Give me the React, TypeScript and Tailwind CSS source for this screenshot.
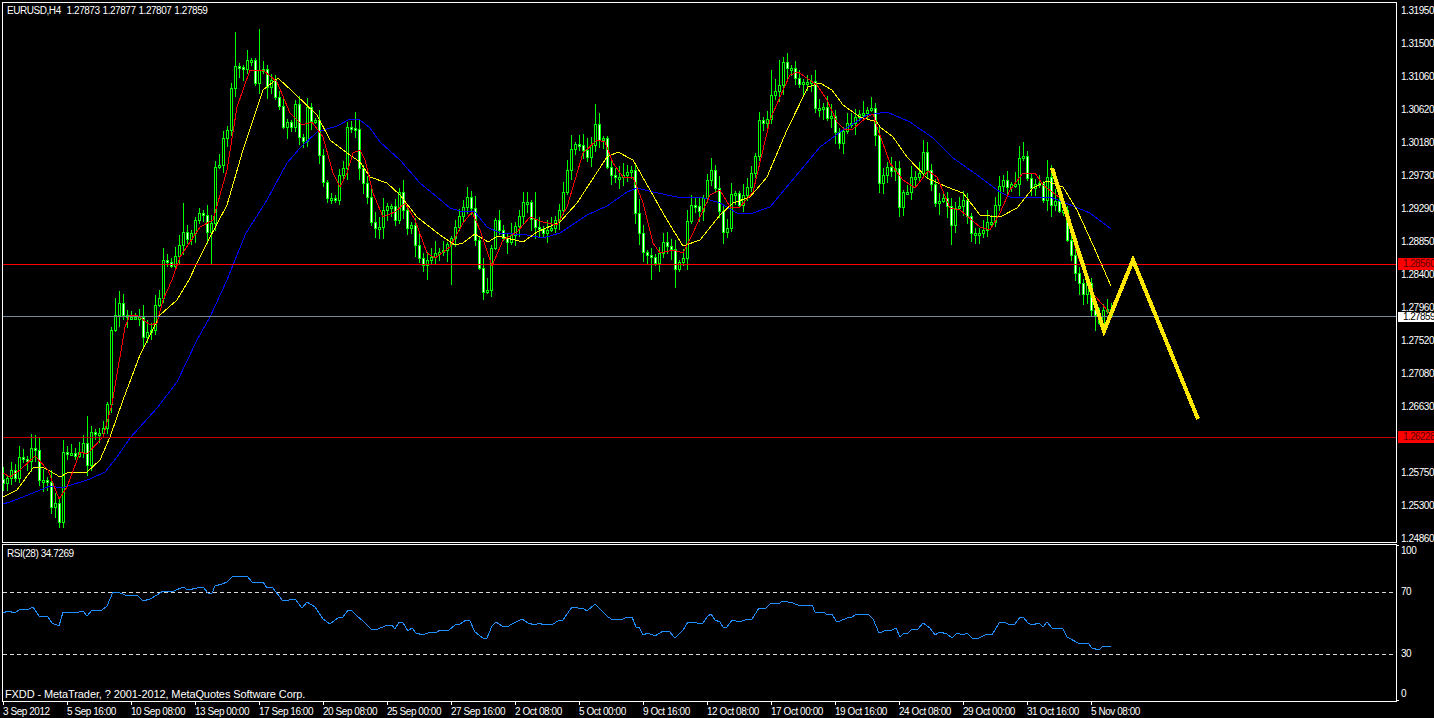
const SANS = "font-['Liberation_Sans',Arial,sans-serif]";

// all chart coordinates are screen pixels, the svg viewBox maps them 1:1
const BLUE = "3,504 10,502 33,493 50,486 62,488 90,479 105,472 117,457 130,438 157,408 177,382 197,340 210,317 227,280 235,260 246,233 267,200 287,163 300,148 317,132 337,126 350,119 360,120 370,128 380,142 400,160 420,183 437,197 450,208 460,211 475,212 487,227 500,233 527,235 543,238 560,233 587,215 607,206 627,192 637,188 653,192 677,197 700,197 720,203 737,213 750,214 770,207 790,183 820,147 843,130 867,115 887,112 910,122 933,138 953,158 980,177 1000,192 1010,197 1050,197 1073,206 1090,213 1111,229";
const YELLOW = "3,497 17,490 33,468 42,467 50,471 60,477 67,473 87,472 100,460 110,437 123,400 140,355 160,315 177,300 189,280 197,263 207,243 227,205 243,150 263,90 278,78 293,92 317,115 330,140 347,153 360,162 370,177 387,183 400,195 417,217 440,235 455,245 463,243 475,234 488,242 498,236 523,242 537,232 560,222 577,203 590,183 607,157 618,152 633,160 650,190 667,220 683,246 700,240 720,215 733,203 750,197 767,177 787,130 808,87 820,83 832,90 843,105 860,117 877,122 880,127 893,137 907,157 927,178 947,187 963,193 980,215 1000,217 1017,208 1033,188 1047,181 1063,187 1077,210 1093,245 1111,286";
const RED = "3,473 10,477 20,470 35,456 48,470 59,499 67,487 80,452 87,454 103,437 112,404 125,327 130,315 137,315 150,325 157,323 163,300 172,280 180,257 200,227 213,220 227,170 237,107 250,70 263,70 277,82 290,113 302,125 312,122 323,137 333,173 340,187 347,173 353,153 360,150 365,160 373,193 383,217 395,212 405,203 415,220 427,253 435,258 450,247 463,223 472,212 480,230 492,266 503,240 517,232 530,217 543,222 557,225 567,207 583,153 597,140 605,142 613,163 623,177 633,177 643,203 653,243 660,253 673,250 683,253 693,233 710,195 720,190 730,207 740,207 753,192 770,120 780,97 790,75 798,72 817,85 827,100 837,122 845,130 853,129 867,117 873,114 878,130 890,163 903,180 915,188 928,171 937,177 950,208 960,210 980,227 990,230 1000,213 1010,190 1023,173 1035,173 1043,185 1060,198 1068,220 1077,253 1090,290 1107,310 1110,315";
const RSI = "3,613 8,611 15,613 20,609 27,610 33,607 39,616 48,617 52,623 59,626 63,612 75,613 83,611 87,616 92,610 102,610 107,606 113,592 118,592 125,595 137,595 143,601 150,599 157,595 163,591 172,592 183,587 188,590 197,588 203,587 208,593 212,593 215,586 222,584 227,582 233,576 243,577 247,576 252,582 263,582 267,588 272,587 283,601 295,599 302,608 307,602 315,607 323,619 330,624 338,618 343,617 348,610 352,611 357,616 363,621 372,630 378,629 385,626 392,625 395,629 399,622 403,623 408,631 412,628 416,633 423,635 430,632 437,632 440,630 448,631 455,625 460,624 466,620 470,621 475,632 483,638 487,638 492,626 496,622 502,626 507,627 512,624 522,619 528,623 535,625 539,623 544,625 553,624 558,621 563,620 572,607 578,608 583,608 587,611 595,604 608,617 613,620 623,619 627,617 632,617 636,627 639,627 643,635 648,633 655,636 663,631 669,631 675,638 683,630 688,622 692,622 697,623 703,623 707,617 711,614 715,620 720,622 723,627 727,627 732,620 740,622 747,619 752,619 759,608 765,609 771,603 778,604 783,601 788,602 793,603 800,606 812,605 815,612 823,612 828,615 832,614 836,621 840,621 847,618 852,617 855,615 868,614 873,619 879,633 887,630 892,630 896,628 900,637 904,633 908,633 912,629 918,629 923,623 930,628 935,635 940,632 947,634 952,638 957,633 963,635 967,633 972,638 979,638 987,634 992,635 999,623 1004,622 1008,624 1015,624 1020,617 1023,617 1028,623 1032,625 1039,623 1043,627 1047,622 1052,628 1057,628 1063,629 1067,637 1080,644 1088,643 1092,648 1099,650 1103,646 1111,647";

// closes traced from the picture, [x, y] pairs
const CLOSES = [
  3,483, 7,478, 11,470, 15,478, 19,457, 23,459, 27,461, 31,448, 35,450, 39,480, 43,480, 47,482, 51,507, 55,503, 59,522, 63,452, 71,453, 75,456, 79,452, 83,443, 87,465, 91,432, 99,433, 103,428, 107,404, 111,330, 115,315, 119,303, 123,315, 127,317, 135,317, 139,317, 143,337, 147,332, 151,330, 155,305, 159,298, 163,260, 167,262, 172,267, 176,252, 179,245, 183,232, 187,239, 192,232, 195,220, 199,213, 203,215, 207,232, 211,223, 215,167, 219,165, 223,138, 227,130, 231,88, 235,66, 239,67, 243,69, 247,60, 251,60, 255,83, 259,70, 263,69, 267,87, 271,80, 275,97, 279,106, 283,127, 287,122, 291,127, 295,104, 299,137, 303,141, 307,107, 311,121, 315,120, 319,155, 323,182, 327,198, 331,198, 335,200, 339,175, 343,168, 347,127, 351,128, 355,129, 359,168,
  367,197, 372,228, 379,227, 383,210, 390,203, 396,223, 399,192, 408,232, 412,223, 416,252, 423,265, 427,260, 435,253, 443,250, 452,237, 456,223, 463,207, 467,197, 472,211, 476,250, 479,268, 483,292, 487,290, 492,237, 496,214, 500,235, 507,242, 512,233, 519,216, 523,202, 528,202, 532,225, 540,230, 543,233, 552,227, 560,208, 567,170, 572,144, 580,145, 587,157, 592,142, 596,118, 599,140, 603,138, 607,167, 612,177, 619,177, 627,172, 632,170, 635,213, 643,252, 652,258, 655,263, 663,242, 672,250, 676,275, 680,258, 683,258, 688,212, 692,202, 700,212, 707,180, 712,167, 716,195,
  723,232, 727,228, 732,185, 735,193, 739,205, 743,195, 748,185, 756,152, 759,120, 763,123, 768,118, 772,87, 776,92, 779,85, 783,62, 788,69, 792,68, 795,78, 799,84, 803,82, 808,82, 812,80, 815,108, 823,107, 827,118, 832,115, 836,138, 839,143, 843,131, 847,123, 851,123, 856,115, 859,114, 863,113, 867,110, 872,108, 875,135, 879,183, 883,175, 887,167, 892,172, 896,167, 899,207, 903,192, 907,192, 911,177, 915,177, 919,173, 923,152, 927,170, 931,184, 936,208, 940,198, 943,198, 947,206, 951,225, 955,208, 959,206, 963,200, 967,216, 971,233, 975,233, 979,233, 983,230, 987,222, 991,222, 995,205, 999,186, 1003,180, 1007,187, 1011,184, 1015,184, 1019,158, 1023,156, 1027,178, 1031,188, 1035,184, 1039,183, 1043,200, 1047,177, 1051,205, 1056,200, 1059,211, 1063,210, 1068,248, 1072,257, 1075,273, 1079,283, 1083,294, 1087,283, 1091,310, 1095,315, 1099,323, 1103,310, 1107,309, 1111,315,
];

// long wicks that stand out in the picture: x -> [high, low]
const SPIKES: Record<number, [number?, number?]> = {
  235: [32], 259: [29], 183: [203], 211: [undefined, 265], 59: [undefined, 528], 19: [446], 31: [434], 35: [435], 87: [416], 115: [298],
  595: [104], 787: [53], 1023: [142], 923: [140], 483: [undefined, 300], 899: [undefined, 217], 427: [undefined, 280], 451: [undefined, 285],
  467: [187], 535: [192], 571: [135], 675: [undefined, 288], 651: [undefined, 280], 771: [70], 779: [60], 951: [undefined, 245], 1095: [undefined, 331],
  1047: [160], 639: [199], 355: [112],
};

function closeAt(x: number) {
  for (let i = 0; i < CLOSES.length - 2; i += 2) {
    if (x <= CLOSES[i + 2]) {
      const t = (x - CLOSES[i]) / (CLOSES[i + 2] - CLOSES[i]);
      return Math.round(CLOSES[i + 1] + t * (CLOSES[i + 3] - CLOSES[i + 1]));
    }
  }
  return CLOSES[CLOSES.length - 1];
}

function rnd(n: number) {
  const s = Math.sin(n * 12.9898) * 43758.5453;
  return s - Math.floor(s);
}

const candles = Array.from({ length: 278 }, (_, i) => {
  const x = 3 + i * 4;
  const close = closeAt(x);
  const open = i === 0 ? close - 4 : closeAt(x - 4);
  const top = Math.min(open, close);
  const bottom = Math.max(open, close);
  const spike = SPIKES[x] ?? [];
  const high = spike[0] ?? top - 2 - Math.floor(rnd(i + 1) * 11);
  const low = spike[1] ?? bottom + 2 + Math.floor(rnd(i + 500) * 11);
  return { x, open, close, top, bottom, high, low };
});

function Candles() {
  return (
    <g shapeRendering="crispEdges">
      {candles.map((c) => {
        const h = Math.max(c.bottom - c.top, 2) + 1;
        return (
          <g key={c.x}>
            <rect x={c.x} y={c.high} width={1} height={c.low - c.high} fill="#00ff00" />
            <rect x={c.x - 1} y={c.top} width={3} height={h} fill="#00ff00" />
            <rect x={c.x} y={c.top + 1} width={1} height={h - 2} fill={c.close > c.open ? "#ffffff" : "#000000"} />
          </g>
        );
      })}
    </g>
  );
}

function Line({ points, color, width = 1 }: { points: string; color: string; width?: number }) {
  return <polyline points={points} fill="none" stroke={color} strokeWidth={width} shapeRendering="crispEdges" />;
}

const PRICE_LABELS = ["1.31950", "1.31500", "1.31060", "1.30620", "1.30180", "1.29730", "1.29290", "1.28850", "1.28400", "1.27960", "1.27520", "1.27080", "1.26630", "1.26190", "1.25750", "1.25300", "1.24860"];
const TIME_LABELS = ["3 Sep 2012", "5 Sep 16:00", "10 Sep 08:00", "13 Sep 00:00", "17 Sep 16:00", "20 Sep 08:00", "25 Sep 00:00", "27 Sep 16:00", "2 Oct 08:00", "5 Oct 00:00", "9 Oct 16:00", "12 Oct 08:00", "17 Oct 00:00", "19 Oct 16:00", "24 Oct 08:00", "29 Oct 00:00", "31 Oct 16:00", "5 Nov 08:00"];

function PriceTag({ box, children }: { box: string; children: string }) {
  return (
    <div className={`absolute left-[1px] right-0 pl-[5px] tracking-[-0.6px] ${box}`}>{children}</div>
  );
}

export default function App() {
  return (
    <div className={`${SANS} flex h-[718px] w-[1434px] flex-col overflow-hidden bg-black pl-[2px] pt-[2px] text-[10px] leading-[12px] tracking-[-0.45px] text-white`}>
      {/* price window */}
      <div className="flex h-[541px]">
        <div className="relative h-[541px] w-[1395px] border border-white">
          <svg className="block" width={1393} height={539} viewBox="3 3 1393 539">
            <Candles />
            <Line points={BLUE} color="#0000ff" />
            <Line points={YELLOW} color="#ffff00" />
            <Line points={RED} color="#ff0000" />
            <Line points="3,264.5 1396,264.5" color="#ff0000" />
            <Line points="3,316.5 1396,316.5" color="#778899" />
            <Line points="3,437.5 1396,437.5" color="#c80000" />
            <Line points="1052,168 1104,331 1133,260 1198,419" color="#ffe800" width={4} />
          </svg>
          <div className="absolute left-[4px] top-[2px] whitespace-pre [word-spacing:0.6px]">EURUSD,H4  1.27873 1.27877 1.27807 1.27859</div>
        </div>
        <div className="relative flex w-[37px] flex-col gap-[21px] overflow-hidden pt-[3px]">
          {PRICE_LABELS.map((p) => (
            <div key={p} className="flex h-[12px] items-center">
              <div className="h-px w-[2px] bg-white" />
              <span className="ml-[4px]">{p}</span>
            </div>
          ))}
          <PriceTag box="top-[256px] h-[12px] bg-[#ff0000] text-[#600000]">1.28560</PriceTag>
          <PriceTag box="top-[310px] h-[10px] bg-white leading-[10px] text-black">1.27859</PriceTag>
          <PriceTag box="top-[429px] h-[12px] bg-[#ff0000] text-[#600000]">1.26228</PriceTag>
        </div>
      </div>

      {/* RSI window */}
      <div className="mt-[1px] flex h-[158px]">
        <div className="relative h-[158px] w-[1395px] border border-white">
          <svg className="block" width={1393} height={156} viewBox="3 545 1393 156">
            <line x1={3} x2={1396} y1={592.5} y2={592.5} stroke="#d8d8d8" strokeDasharray="4 3" shapeRendering="crispEdges" />
            <line x1={3} x2={1396} y1={654.5} y2={654.5} stroke="#d8d8d8" strokeDasharray="4 3" shapeRendering="crispEdges" />
            <Line points={RSI} color="#1e90ff" />
          </svg>
          <div className="absolute left-[4px] top-[3px]">RSI(28) 34.7269</div>
          <div className="absolute bottom-[1px] left-[2px] text-[11px] tracking-[-0.1px]">FXDD - MetaTrader, ? 2001-2012, MetaQuotes Software Corp.</div>
        </div>
        <div className="relative flex w-[37px] flex-col pl-[4px]">
          <div className="absolute left-0 top-[1px] h-px w-[2px] bg-white" />
          <div className="absolute bottom-[1px] left-0 h-px w-[2px] bg-white" />
          <div className="mt-[1px]">100</div>
          <div className="mt-[29px]">70</div>
          <div className="mt-[50px]">30</div>
          <div className="mt-[28px]">0</div>
        </div>
      </div>

      {/* time axis */}
      <div className="flex pl-[1px]">
        {TIME_LABELS.map((t) => (
          <div key={t} className="w-[64px] shrink-0 whitespace-nowrap">
            <div className="h-[3px] w-px bg-white" />
            <div className="mt-[1px]">{t}</div>
          </div>
        ))}
      </div>
    </div>
  );
}
